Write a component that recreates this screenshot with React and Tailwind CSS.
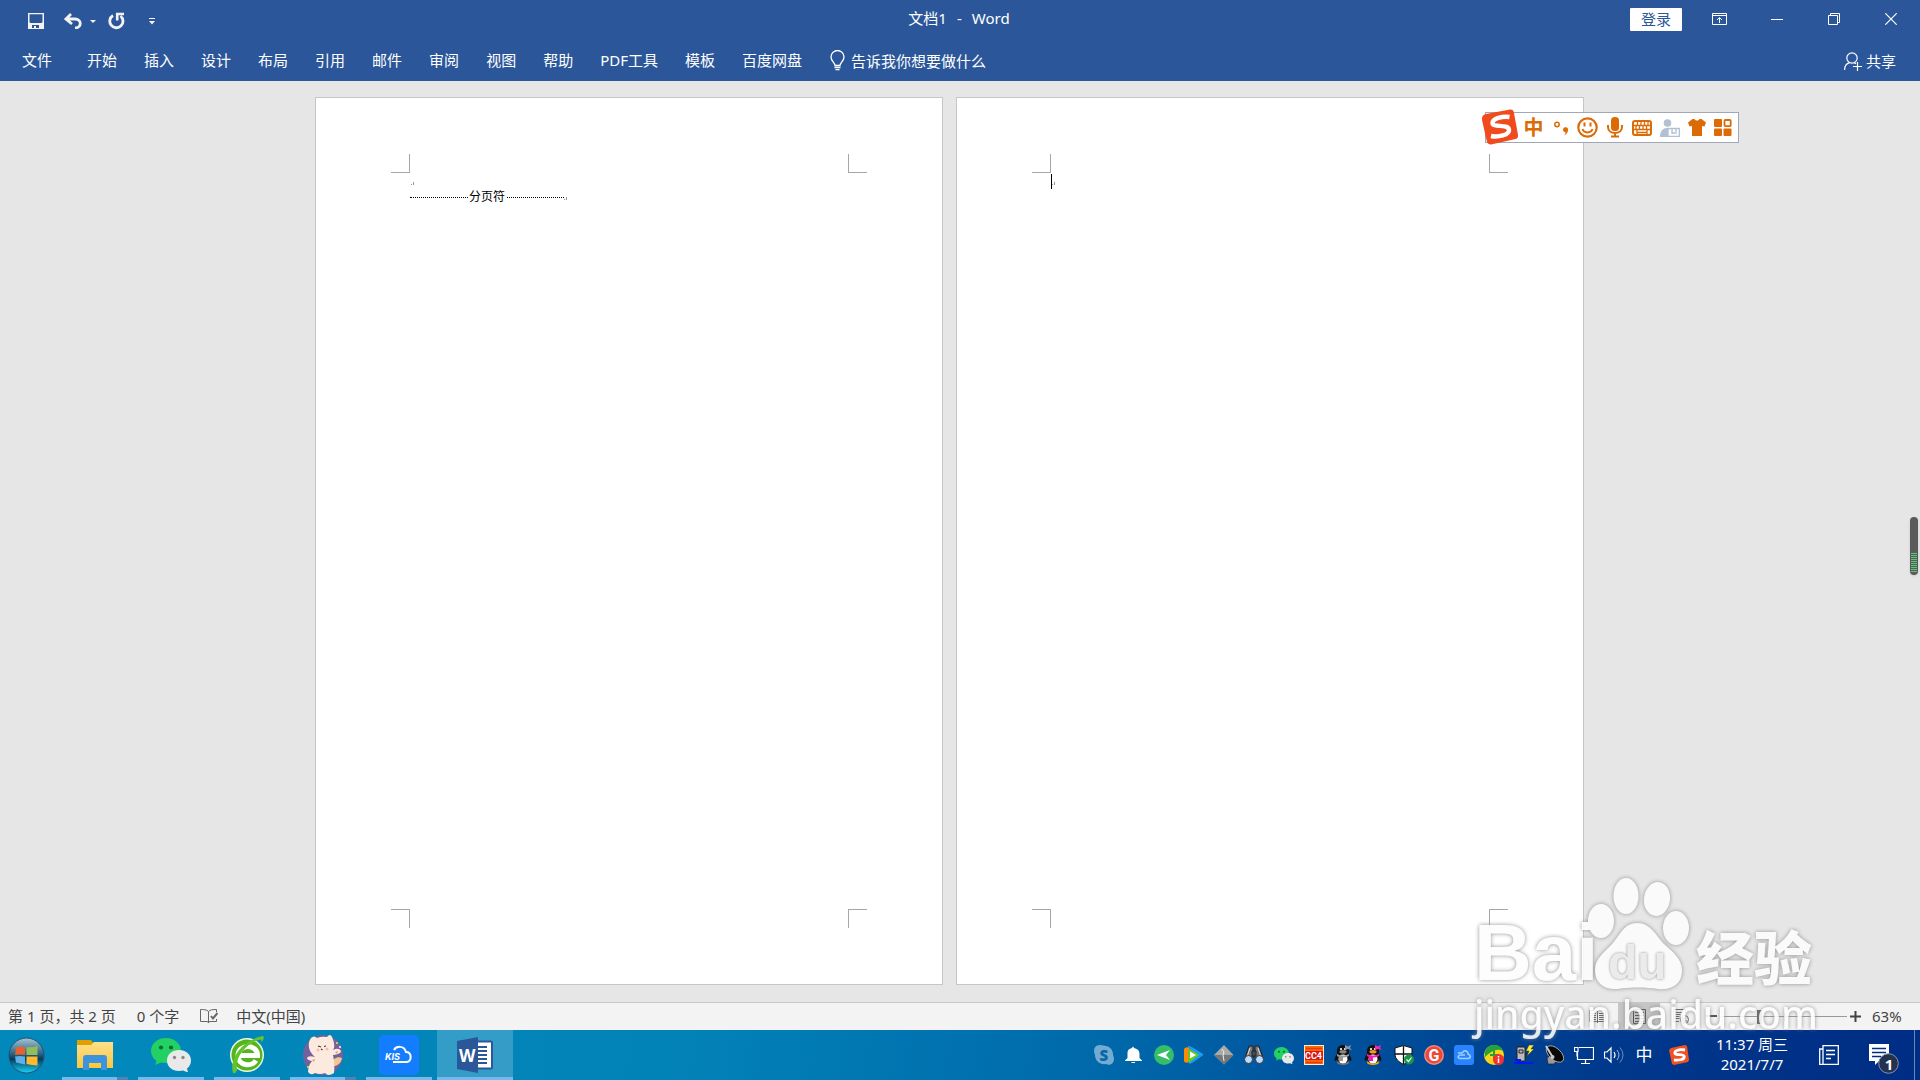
import React from "react";

const Svg = ({ w = 20, h = 20, box, children, className = "" }) => (
  <svg width={w} height={h} viewBox={box || `0 0 ${w} ${h}`} fill="none" aria-hidden="true" className={`shrink-0 ${className}`}>
    {children}
  </svg>
);

const TABS = ["开始", "插入", "设计", "布局", "引用", "邮件", "审阅", "视图", "帮助", "PDF工具", "模板", "百度网盘"];

function TitleBar() {
  return (
    <div className="grid h-[38px] grid-cols-[1fr_auto_1fr] items-center">
      <div className="flex items-center pt-1 pl-7 text-[#f3f3f3]">
        <button aria-label="保存" className="mr-5">
          <Svg w={16} h={16}>
            <path fill="currentColor" fillRule="evenodd" d="M0 0h16v16H0zM1.500 1.300v8l1 .7h11l1-.7v-8zM4 12v3h2v-2h2v2h3v-3z" />
          </Svg>
        </button>
        <button aria-label="撤消" className="mr-2">
          <Svg w={18} h={16}>
            <path d="M7 1L2 6l6 5M2.500 6H11c7 0 7 9 0 9" stroke="currentColor" strokeWidth="2.800" />
          </Svg>
        </button>
        <button aria-label="撤消选项" className="mr-3">
          <Svg w={6} h={3}><path fill="currentColor" d="M0 0h6L3 3z" /></Svg>
        </button>
        <button aria-label="重复" className="mr-6">
          <Svg w={17} h={18}>
            <path d="M5 3.500A6.600 6.600 0 1 0 12.500 4" stroke="currentColor" strokeWidth="2.800" />
            <path d="M9.200 8.500V2H16" stroke="currentColor" strokeWidth="2.600" />
          </Svg>
        </button>
        <button aria-label="自定义快速访问工具栏">
          <Svg w={6} h={7}><path fill="currentColor" d="M0 0h6v1H0zM0 3h6L3 6.500z" /></Svg>
        </button>
      </div>
      <h1 className="flex gap-[10px] pr-0.5 pb-0.5 text-[15px] leading-5">
        <span>文档1</span><span>-</span><span>Word</span>
      </h1>
      <div className="flex items-center justify-end pr-px">
        <button className="mr-[9px] h-[23px] w-[52px] rounded-[1px] bg-white text-[15px] leading-[22px] text-[#2b579a]">登录</button>
        <button aria-label="功能区显示选项" className="flex w-[57px] justify-center">
          <Svg w={15} h={12}><path stroke="#fff" d="M.5.5h14v11H.5zM0 2.500h15M7.500 10V5M5 7l2.500-2.500L10 7" /></Svg>
        </button>
        <button aria-label="最小化" className="flex w-[57px] justify-center">
          <Svg w={12} h={11}><path stroke="#fff" d="M0 5.500h12" /></Svg>
        </button>
        <button aria-label="还原" className="flex w-[57px] justify-center">
          <Svg w={12} h={12}><path stroke="#fff" d="M.5 2.500h9v9h-9zM2.500 2V.5h9v9H10" /></Svg>
        </button>
        <button aria-label="关闭" className="flex w-[57px] justify-center">
          <Svg w={12} h={12}><path stroke="#fff" strokeWidth="1.200" d="M.3.3l11.400 11.400M11.700.3L.3 11.700" /></Svg>
        </button>
      </div>
    </div>
  );
}

function Ribbon() {
  return (
    <nav className="flex h-[43px] items-center pr-6 pl-[22px] text-[15px] leading-5">
      <button className="mr-[35px]">文件</button>
      <div className="flex gap-[27px]">
        {TABS.map((t) => (
          <button key={t} className="whitespace-nowrap">{t}</button>
        ))}
      </div>
      <button className="ml-7 flex items-center gap-[6px] pt-0.5 whitespace-nowrap">
        <Svg w={15} h={21}>
          <path stroke="#fff" strokeWidth="1.300" d="M5 15.500c0-3-4-4-4-8.500a6.500 6.500 0 0 1 13 0c0 4.500-4 5.500-4 8.500zM4.500 17.500h6M5.500 19.700h4" />
        </Svg>
        告诉我你想要做什么
      </button>
      <button className="ml-auto flex items-center gap-1 pt-[3px] whitespace-nowrap">
        <Svg w={18} h={19}>
          <circle cx="8" cy="6" r="5.200" stroke="#fff" strokeWidth="1.200" />
          <path stroke="#fff" strokeWidth="1.200" d="M.6 18c0-4 2-6.500 5-7.300M10 10.800l2 1M13.500 10v9M9 14.500h9" />
        </Svg>
        共享
      </button>
    </nav>
  );
}

const CropRow = ({ top }) => (
  <div className="flex justify-between">
    <span className={top ? "h-[19px] w-[19px] border-r border-b border-[#a6a6a6]" : "h-[19px] w-[19px] border-t border-r border-[#a6a6a6]"} />
    <span className={top ? "h-[19px] w-[19px] border-b border-l border-[#a6a6a6]" : "h-[19px] w-[19px] border-t border-l border-[#a6a6a6]"} />
  </div>
);

const ParaMark = () => (
  <Svg w={4} h={3}><path fill="#999" d="M0 2h1v1H0zM2 0h1v3H2z" /></Svg>
);

const Page = ({ children }) => (
  <article className="flex h-[888px] w-[628px] shrink-0 flex-col border border-[#c6c6c6] bg-white px-[75px] py-14">
    <CropRow top />
    <div className="flex-1 px-[19px] text-black">{children}</div>
    <CropRow />
  </article>
);

const O = "#dc6b05";
function ImeBar() {
  return (
    <div className="absolute top-[31px] right-[181px] flex h-[31px] w-[254px] items-center border border-[#a3a7b5] bg-white pl-[34px]">
      <Svg w={38} h={36} className="absolute -top-1 -left-[5px]">
        <path fill="#f04a1d" d="M5 5L29 .6q3-.4 3.800 2.400L37 26q.5 3-2.500 4L10 35.400q-3 .4-4-2.400L1 11q-.6-5 4-6z" />
        <path stroke="#fff" strokeWidth="4.500" d="M28.500 8c-7-1-17 1.500-17 6 0 5 16 .5 16.500 7 .4 5-11 7.500-18 6" />
      </Svg>
      <button className="w-[27px] text-[20px] leading-6 font-bold text-[#dc6b05]">中</button>
      <button aria-label="标点" className="flex w-[27px] justify-center">
        <Svg w={16} h={16}><circle cx="4" cy="4.500" r="2.200" stroke={O} strokeWidth="1.500" /><path fill={O} d="M10 9.500a2.500 2.500 0 1 1 5 .5c0 2.500-1.500 4.500-4 5.500 1-1.200 1.700-2.200 1.600-3.300-1.500 0-2.600-1-2.600-2.700z" /></Svg>
      </button>
      <button aria-label="表情" className="flex w-[27px] justify-center">
        <Svg w={21} h={21}><circle cx="10.500" cy="10.500" r="9.200" stroke={O} strokeWidth="2.200" /><path stroke={O} strokeWidth="2" d="M7.500 5.500v4M13.500 5.500v4M5.500 12c1.500 4.500 8.500 4.500 10 0" /></Svg>
      </button>
      <button aria-label="语音" className="flex w-[27px] justify-center">
        <Svg w={16} h={21}><rect x="4" width="8" height="14" rx="3.500" fill={O} /><path stroke={O} strokeWidth="2" d="M1 8v2c0 8 14 8 14 0V8M8 16v3M4 19.500h8" /></Svg>
      </button>
      <button aria-label="软键盘" className="flex w-[28px] justify-center">
        <Svg w={20} h={16}><rect x="1" y="1" width="18" height="14" rx="2" stroke={O} strokeWidth="2" /><path stroke={O} strokeWidth="1.300" d="M2 5.500h16M2 9.500h16M5.500 2v3M9 2v3M12.500 2v3M16 2v3M4 6v3M7.500 6v3M11 6v3M14.500 6v3M5 10v5M15 10v5M5 12.500h10" /></Svg>
      </button>
      <button aria-label="登录" className="flex w-[28px] justify-center">
        <Svg w={20} h={18}><circle cx="7.500" cy="4" r="3.800" fill="#b3bfd3" /><path fill="#b3bfd3" d="M0 18c0-6 3-9 7-9h5v9z" /><path fill="#fff" stroke="#b3bfd3" strokeWidth="1.300" d="M8 9.500h11.300v8H8zM12 9v6M12 14h3M16 9v6" /></Svg>
      </button>
      <button aria-label="皮肤" className="flex w-[26px] justify-center">
        <Svg w={18} h={17}><path fill={O} d="M4.500 0h2c1 2 4 2 5 0h2L18 3.500 16.500 7.500 14 7v10H4V7l-2.500.5L0 3.500z" /></Svg>
      </button>
      <button aria-label="工具箱" className="flex w-[26px] justify-center">
        <Svg w={18} h={17}><rect width="8" height="8" rx="1" fill={O} /><rect y="9.500" width="8" height="7.500" rx="1" fill={O} /><rect x="9.500" y="9.500" width="8" height="7.500" rx="1" fill={O} /><rect x="10.500" y="1" width="6.200" height="6.200" rx="1" stroke={O} strokeWidth="1.800" /></Svg>
      </button>
    </div>
  );
}

function StatusBar() {
  return (
    <footer className="flex h-7 items-center border-t border-[#c6c6c6] bg-[#f3f3f3] pl-2 text-[15px] leading-5 text-[#444]">
      <button className="mr-[21px] pb-0.5 whitespace-nowrap">第 1 页，共 2 页</button>
      <button className="mr-5 pb-0.5 whitespace-nowrap">0 个字</button>
      <button aria-label="校对" className="mr-[18px] ml-px">
        <Svg w={18} h={15}><path stroke="#666" d="M8.500 2.500C7 .5 3 .5.500.5v12h7l1 1.500 1-1.500h7V10M8.500 2.500V14M8.500 2.500C10 .7 13 .5 16.500.5V3" /><path stroke="#666" strokeWidth="2" d="M11 7l2 2.500L17.500 4" /></Svg>
      </button>
      <button className="pb-0.5 whitespace-nowrap">中文(中国)</button>
      <div className="ml-auto flex h-full items-center">
        <button aria-label="阅读视图" className="flex w-[42px] justify-center">
          <Svg w={17} h={13}><path stroke="#666" d="M.5.500h7l1 1 1-1h7v11h-7l-1 1-1-1h-7zM8.500 1v12M2 3.500h5M2 5.500h5M2 7.500h5M2 9.500h5M10 3.500h5M10 5.500h5M10 7.500h5M10 9.500h5" /></Svg>
        </button>
        <button aria-label="页面视图" className="flex h-full w-[42px] items-center justify-center bg-[#c6c6c6]">
          <Svg w={13} h={15}><path stroke="#555" d="M.5.500h12v14H.5zM2 3.500h9M2 6.500h9M2 9.500h9M2 12.500h9" /></Svg>
        </button>
        <button aria-label="Web 版式视图" className="flex w-[42px] justify-center">
          <Svg w={16} h={15}><path stroke="#666" d="M6 12.500H.5V.5h12V5M2.500 3.500h8M2.500 5.500h5M2.500 7.500h4M2.500 9.500h4" /><circle cx="11.500" cy="10.500" r="4" stroke="#666" /><path fill="#666" d="M9 8l3 1-1 3 3-1-2 3-3-2z" /></Svg>
        </button>
        <button aria-label="缩小" className="mr-1 ml-1"><Svg w={11} h={11}><path stroke="#555" strokeWidth="2" d="M0 5h11" /></Svg></button>
        <input
          type="range"
          min="10"
          max="190"
          defaultValue="63"
          aria-label="显示比例"
          className="h-4 w-[126px] appearance-none bg-[linear-gradient(#999,#999),linear-gradient(#999,#999)] bg-[length:100%_1px,1px_8px] bg-center bg-no-repeat [&::-webkit-slider-thumb]:h-[14px] [&::-webkit-slider-thumb]:w-[5px] [&::-webkit-slider-thumb]:appearance-none [&::-webkit-slider-thumb]:bg-[#666]"
        />
        <button aria-label="放大" className="mr-[11px] ml-[3px]"><Svg w={11} h={11}><path stroke="#444" strokeWidth="2" d="M0 5.500h11M5.500 0v11" /></Svg></button>
        <button className="w-12 pb-0.5 text-left">63%</button>
      </div>
    </footer>
  );
}

const WeChat = ({ w, h }) => (
  <Svg w={w} h={h} box="0 0 40 34">
    <path fill="#22d063" d="M15 0C6 0 0 6 0 13c0 4 2 7.500 5.500 10L4 27l6-2.500c10 2 20-3 20-11.500C30 6 24 0 15 0z" />
    <circle cx="10" cy="9.500" r="2.100" fill="#126b35" /><circle cx="20" cy="9.500" r="2.100" fill="#126b35" />
    <path fill="#e9e9ea" d="M28 12c-7 0-12 4.500-12 10.500S21 33 28 33l4-.5 5 2-1-4c2.500-2 4-4.500 4-8C40 16.500 35 12 28 12z" />
    <circle cx="23.500" cy="19.500" r="1.700" fill="#888" /><circle cx="32" cy="19.500" r="1.700" fill="#888" />
  </Svg>
);

const APPS = [
  ["文件资源管理器", true, (
    <Svg w={36} h={32} key="i">
      <defs><linearGradient id="folder" x1="0" y1="0" x2="0" y2="1"><stop stopColor="#ffe08a" /><stop offset="1" stopColor="#fbc63d" /></linearGradient></defs>
      <path fill="#e0a000" d="M0 1h14l3 4-3 4H0z" /><path fill="url(#folder)" d="M0 6h14l3-3h19v26H0z" />
      <path fill="#3b94dc" d="M6 31V19q0-3 3-3h18q3 0 3 3v12h-6v-7H12v7z" />
    </Svg>
  )],
  ["微信", false, <WeChat key="i" w={40} h={34} />],
  ["360浏览器", false, (
    <Svg w={36} h={38} key="i">
      <circle cx="18" cy="19" r="17" fill="#eefae0" /><circle cx="18" cy="19" r="15.500" fill="#55b51e" />
      <path stroke="#fff" strokeWidth="5" d="M9 19.500h19.500c0-12-19-12-19.500 0 0 11 14 11.500 18 5" />
      <path fill="#62c42a" d="M4 37C0 24 12 4 34 0c2 1 0 5-2 7 1-3 0-4-2-3C16 8 6 22 8 33c0 3-2 5-4 4z" />
    </Svg>
  )],
  ["头像", true, (
    <Svg w={40} h={40} key="i">
      <circle cx="20" cy="20" r="20" fill="#72619c" />
      <path fill="#f2c792" d="M28 29c2-5 6-8 11-6-1 6-6 9-11 8z" />
      <path fill="#fdeade" d="M8 3q3-3 6 0 5-2 10-1 3-4 5 0 4 9 1 13 6-3 8 1 0 3-8 4 2 8 1 18-6 4-9 0-5 2-10 0-4 3-7-1 0-6 4-11-5-1-5-3 1-3 8-1C4 15 5 7 8 3z" />
      <path stroke="#4d3630" strokeWidth="1.200" d="M15 11l3 1M21 11.500l2-.5M18 14l1.500 1" />
      <circle cx="15" cy="15" r="1.500" fill="#f7b9ac" /><circle cx="24" cy="14" r="1.500" fill="#f7b9ac" />
      <path fill="#ed927f" d="M9 25l3-1-1 3zM32 17l3-1-1 3z" /><circle cx="34" cy="8" r="1" fill="#ffd66b" /><circle cx="37" cy="12" r="1" fill="#fff" /><circle cx="5" cy="32" r="1" fill="#ffd66b" />
    </Svg>
  )],
  ["KIS 云", false, (
    <Svg w={40} h={40} key="i">
      <rect width="40" height="40" rx="5" fill="#147dff" />
      <text x="6" y="25" fill="#fff" fontSize="9" fontStyle="italic" fontWeight="700" fontFamily="Inter, sans-serif">KIS</text>
      <path stroke="#fff" strokeWidth="2" d="M15 15c2-4 10-5 12 2 6 0 6 9 1 10H14" />
    </Svg>
  )],
  ["Word", false, (
    <Svg w={36} h={36} key="i">
      <rect x="17" y="4.500" width="18" height="27" rx="1" fill="#fff" stroke="#2b579a" strokeWidth="2" />
      <path fill="#2b579a" d="M0 4l21-4v36L0 32z" />
      <path stroke="#2b579a" strokeWidth="2" d="M20 10h10M20 14h10M20 18h10M20 22h10M20 26h10" />
      <text x="2" y="25" fill="#fff" fontSize="17" fontWeight="700" fontFamily="Open Sans, sans-serif">W</text>
    </Svg>
  )],
];

const Penguin = ({ bow, scarf, beak, face }) => (
  <Svg>
    <ellipse cx="9" cy="17.500" rx="6" ry="2.500" fill={beak} /><path fill="#111" d="M3 6c0-8 12-8 12 0v3c2 3 3 5 2 7-1 0-2-1-2-2-1 6-11 6-12 0 0 1-1 2-2 2-1-2 0-4 2-7z" />
    <ellipse cx="9" cy="14" rx="4.500" ry="4.500" fill="#fff" /><ellipse cx="9" cy="6.800" rx="3.600" ry="1.800" fill={face} />
    <circle cx="7" cy="4" r="1.100" fill="#fff" /><circle cx="11" cy="4" r="1.100" fill="#fff" />
    <path fill={scarf} d="M3 9q6 3 12 0v2q-3 1.500-6 1.500V16H5v-4l-2-1z" /><path fill={bow} d="M11 0l3 1.500L17 0l-1 3 2 2-4-1-3 1z" />
  </Svg>
);

const SogouS = () => (
  <Svg><path fill="#f25022" d="M2 3L16 0l2 1 2 14-1 2-14 3-2-1L0 5z" /><path stroke="#fff" strokeWidth="2.800" d="M16 5C9 4 5 6 6 8.500c1 2 9 0 9.300 3C15.500 15 9 15.500 5 15" /></Svg>
);

const TRAY = [
  ["Skype", <Svg key="i"><path fill="#73acd2" d="M6 0c3 0 4 1 6 1 5 1 7 5 7 8 0 2 1 3 1 5 0 5-5 7-8 5-7 1-11-4-11-9C-1 6 0 0 6 0z" /><text x="5.500" y="15.500" fill="#0866a6" fontSize="15" fontWeight="800" fontFamily="Open Sans, sans-serif">S</text></Svg>],
  ["通知", <Svg key="i"><path fill="#fff" d="M8 3q1-3 2 0c4 1 5.500 3 5.500 6v4L18 15.500V16H1v-.5L3.500 13V9C3.500 6 4 4 8 3zM7.500 17h3.500v1H7.500z" /></Svg>],
  ["发送", <Svg key="i"><circle cx="10" cy="10" r="10" fill="#36bd68" /><path fill="#fff" d="M3 10l13-5-4 5 4 5z" /></Svg>],
  ["腾讯视频", <Svg key="i"><path fill="#1c9bf0" d="M4 1q2-1 15 8 1 1-1 2L8 18q-4 2-4-2z" /><path fill="#ff8a00" d="M0 4q2-3 5-1v14q-4 2-5-1z" /><path fill="#68c61e" d="M4 5q1-2 11 5L6 17q-2 1-2-2z" /><path fill="#fff" d="M6 6.500L12 10l-6 3.500z" /></Svg>],
  ["Git", <Svg key="i"><path fill="#a9a9a9" d="M10 0l9.500 10L10 19.500 0 10z" /><path fill="#777" d="M0 10h19.500L10 19.500z" /><path stroke="#eee" d="M8 4l2 3-1 3 1 6" /></Svg>],
  ["望远镜", <Svg key="i"><path fill="#777" stroke="#222" d="M5 1h4v12H1zM11 1h4l4 12h-8zM8 6h4v5H8z" /><path stroke="#ddd" d="M6 3L3 12M14 3l3 9" /><circle cx="4.500" cy="14.500" r="4" fill="#b7dcff" stroke="#333" /><circle cx="15.500" cy="14.500" r="4" fill="#b7dcff" stroke="#333" /></Svg>],
  ["微信", <WeChat key="i" w={20} h={17} />],
  ["CC", <Svg key="i"><rect x=".5" y=".5" width="19" height="19" fill="#ff6a00" stroke="#ffe8ce" /><path fill="#d91515" d="M1 6h18v9H1z" /><path stroke="#e83a10" strokeWidth="1.500" d="M2 3.500h16M2 17.500h16" /><text x="1" y="14" fill="#fff" fontSize="9" fontWeight="700" fontFamily="Roboto, sans-serif">CC4</text></Svg>],
  ["QQ 离线", <Penguin key="i" bow="#8998a8" scarf="#999" beak="#777" face="#888" />],
  ["QQ", <Penguin key="i" bow="#ff24b4" scarf="#ff17b0" beak="#ffa500" face="#f39b19" />],
  ["安全中心", <Svg key="i"><path fill="#fff" stroke="#111" d="M9.500.500L18 3v6c0 5-4 8-8.500 10.500C5 17 1 14 1 9V3z" /><path stroke="#111" strokeWidth="1.300" d="M9.500 1v18M1 9h17" /><circle cx="15" cy="14.500" r="5" fill="#159748" /><path stroke="#fff" strokeWidth="1.200" d="M12.500 14.500l2 2 3-4" /></Svg>],
  ["G", <Svg key="i"><circle cx="10" cy="10" r="10" fill="#ef8b7c" /><circle cx="10" cy="10" r="8.500" fill="#ee4638" /><text x="4.500" y="15.500" fill="#fff" fontSize="16" fontWeight="700" fontFamily="Roboto, sans-serif">G</text></Svg>],
  ["云", <Svg key="i"><rect width="20" height="20" rx="3" fill="#2783ff" /><path stroke="#a4d0ff" strokeWidth="1.600" d="M4 8h4l2-2c4-1 4 3 4 3 3 1 3 4 0 4.500H6c-3-.5-2-3.500 1-3.500h4" /></Svg>],
  ["360", <Svg key="i"><circle cx="10" cy="10" r="10" fill="#f7d51d" /><path fill="#22a33a" d="M1 7C4-2 16-2 19 6c-6-3-12 0-18 6z" /><path stroke="#22a33a" strokeWidth="2" d="M10 5v9M6 10h8" /><circle cx="14.500" cy="14.500" r="5.500" fill="#f33030" /><path stroke="#fff" strokeWidth="1.500" d="M14.500 11v1.500M14.500 13.500V18" /></Svg>],
  ["电源", <Svg key="i"><path fill="#bbb" stroke="#222" d="M3 2h8v14H3zM5 5h4v3H5zM11 9h3" /><path fill="#ffee37" stroke="#333" strokeWidth=".5" d="M15 0h5l-3 4h3l-7 7 2-5h-3z" /><path stroke="#0018f5" strokeWidth="2" d="M0 18h19M1 15h5v3" /></Svg>],
  ["音频", <Svg key="i"><path fill="#999" stroke="#222" strokeWidth=".7" d="M3 13l6-4 4 6-3 4H4z" /><ellipse cx="11" cy="9" rx="10.500" ry="5.800" transform="rotate(42 11 9)" fill="#080808" stroke="#bbb" strokeWidth=".8" /><path stroke="#ccc" strokeWidth="2" d="M2 1l6 10" /><circle cx="8.500" cy="12" r="2" fill="#ccc" /></Svg>],
  ["网络", <Svg key="i"><path stroke="#fff" strokeWidth="1.200" d="M5 2.500h14.500v12H3.500V7M11.500 15v3M7 18.500h9M.5 2.500H4v4H.5zM3 6.500v5" /></Svg>],
  ["音量", <Svg key="i"><path stroke="#fff" strokeWidth="1.200" d="M.5 7H3l4-4v14l-4-4H.5zM10 7q2 3 0 6" /><path stroke="#a8b8d9" d="M13 5q4 5 0 10" /><path stroke="#6f8bc0" d="M16 2.500q6 7.500 0 15" /></Svg>],
];

function Taskbar() {
  return (
    <div className="flex h-[50px] items-center bg-[linear-gradient(100deg,#0289bc_0%,#0283b8_35%,#0068aa_58%,#00509b_70%,#00388c_84%,#002c84_100%)] text-white">
      <button aria-label="开始" className="mr-1 ml-2">
        <Svg w={37} h={37}>
          <defs>
            <linearGradient id="orb" x1="0" y1="0" x2="0" y2="1"><stop stopColor="#a9c3d2" /><stop offset=".45" stopColor="#2b6485" /><stop offset=".6" stopColor="#07395b" /><stop offset="1" stopColor="#19d4f5" /></linearGradient>
          </defs>
          <circle cx="18.500" cy="18.500" r="17.500" fill="url(#orb)" stroke="#1c5375" />
          <path fill="#e9602c" d="M8 11q4-2 9-1v8q-5-1-10 0z" /><path fill="#92bd5b" d="M18.500 10q5 1 11-1v9h-11z" />
          <path fill="#5bb1e8" d="M7 19.500q5-1 10 0v8q-5-1-9-2z" /><path fill="#ffb92e" d="M18.500 19.500h11v9q-5-.5-11-1.500z" />
        </Svg>
      </button>
      <div className="ml-2 flex h-full">
        {APPS.map(([name, many, icon]) => (
          <button key={name} aria-label={name} className={name === "Word" ? "flex h-full w-[76px] flex-col items-center bg-white/20" : "flex h-full w-[76px] flex-col items-center px-[5px]"}>
            <span className="flex flex-1 items-center pt-0.5">{icon}</span>
            <span className="flex h-[3px] w-full bg-[#76b9ed]">{many && <span className="ml-auto w-[11px] bg-[#4d84b4]" />}</span>
          </button>
        ))}
      </div>
      <div className="ml-auto flex items-center gap-2.5">
        {TRAY.map(([name, icon]) => (
          <button key={name} aria-label={name} className="flex w-5 justify-center">{icon}</button>
        ))}
        <button className="w-5 text-[17px] leading-5">中</button>
        <button aria-label="搜狗输入法" className="ml-[5px]"><SogouS /></button>
      </div>
      <button className="ml-3 w-[102px] pb-0.5 text-center text-[15px] leading-5 whitespace-nowrap">
        <span className="block">11:37 周三</span>
        <span className="block">2021/7/7</span>
      </button>
      <button aria-label="便笺" className="ml-4">
        <Svg><path stroke="#fff" strokeWidth="1.300" d="M4 .7h15.300v18.600H.7V4H4zM4 4v15M7 5.500h9M7 9.500h9M7 13.500h5" /></Svg>
      </button>
      <button aria-label="操作中心" className="relative mt-2 mr-[14px] ml-[30px]">
        <Svg w={31} h={30}>
          <path fill="#fff" d="M0 0h20v17H10l-4 4v-4H0z" /><path stroke="#002c84" strokeWidth="1.500" d="M3 4.500h14M3 8.500h14M3 12.500h9" />
          <circle cx="19.500" cy="19.500" r="9.800" fill="#24324f" stroke="#8895ad" />
        </Svg>
        <span className="absolute right-[5px] bottom-0 w-3 text-center text-[15px] leading-5 font-bold">1</span>
      </button>
      <span className="mr-[5px] h-full w-px bg-[#6d86b8]" />
    </div>
  );
}

function Watermark() {
  return (
    <div className="pointer-events-none absolute right-[106px] bottom-[42px] w-[340px] text-[#fdfdfd] opacity-90 [filter:drop-shadow(0_0_2px_#888)]">
      <div className="flex items-end">
        <span className="w-[114px] font-['Liberation_Sans'] text-[80px] leading-[74px] font-bold">Bai</span>
        <span className="relative">
          <Svg w={104} h={112}>
            <g fill="currentColor">
              <ellipse cx="13" cy="43" rx="13" ry="17" /><ellipse cx="38" cy="18" rx="12.500" ry="18" />
              <ellipse cx="69" cy="21" rx="13" ry="17" transform="rotate(8 69 21)" /><ellipse cx="88" cy="50" rx="13" ry="17" />
              <path d="M49 45c14 0 20 14 27 21 9 8 18 15 18 26 0 17-14 20-24 19-10-2-30-2-40 0C19 112 7 107 7 92c0-12 10-18 18-27 7-8 11-20 24-20z" />
            </g>
          </Svg>
          <span className="absolute right-0 bottom-[3px] w-[84px] font-['Liberation_Sans'] text-[48px] leading-[48px] font-bold text-[#ececec] [text-shadow:0_0_3px_#888]">du</span>
        </span>
        <span className="ml-1 text-[58px] leading-[64px] font-black">经验</span>
      </div>
      <div className="font-['Noto_Sans'] text-[39px] leading-[48px] font-medium">jingyan.baidu.com</div>
    </div>
  );
}

export default function App() {
  return (
    <div className="relative flex min-h-screen flex-col overflow-hidden bg-[#e6e6e6] font-['Noto_Sans','Noto_Sans_CJK_SC',sans-serif]">
      <header className="bg-[#2b579a] text-white">
        <TitleBar />
        <Ribbon />
      </header>
      <main className="relative flex flex-1 justify-center gap-[13px] pt-4 pr-[21px]">
        <Page>
          <p className="flex h-3 items-end px-px"><ParaMark /></p>
          <p className="flex h-[23px] items-center text-[12px] leading-4">
            <span className="mt-0.5 mr-px w-[58px] border-t border-dotted border-black" />
            分页符
            <span className="mt-0.5 ml-0.5 w-[57px] border-t border-dotted border-black" />
            <span className="mt-1"><ParaMark /></span>
          </p>
        </Page>
        <Page>
          <p className="flex h-4 items-end pt-px"><span className="h-[15px] w-px bg-black" /><span className="pb-1"><ParaMark /></span></p>
        </Page>
        <ImeBar />
        <div className="absolute top-[436px] right-0.5 flex h-[58px] w-2 flex-col justify-end rounded bg-[#5a5a5a] px-px pb-0.5 shadow">
          <span className="h-5 w-full bg-[repeating-linear-gradient(#58c97b_0_1px,#5a5a5a_1px_2px)]" />
        </div>
      </main>
      <StatusBar />
      <Taskbar />
      <Watermark />
    </div>
  );
}
